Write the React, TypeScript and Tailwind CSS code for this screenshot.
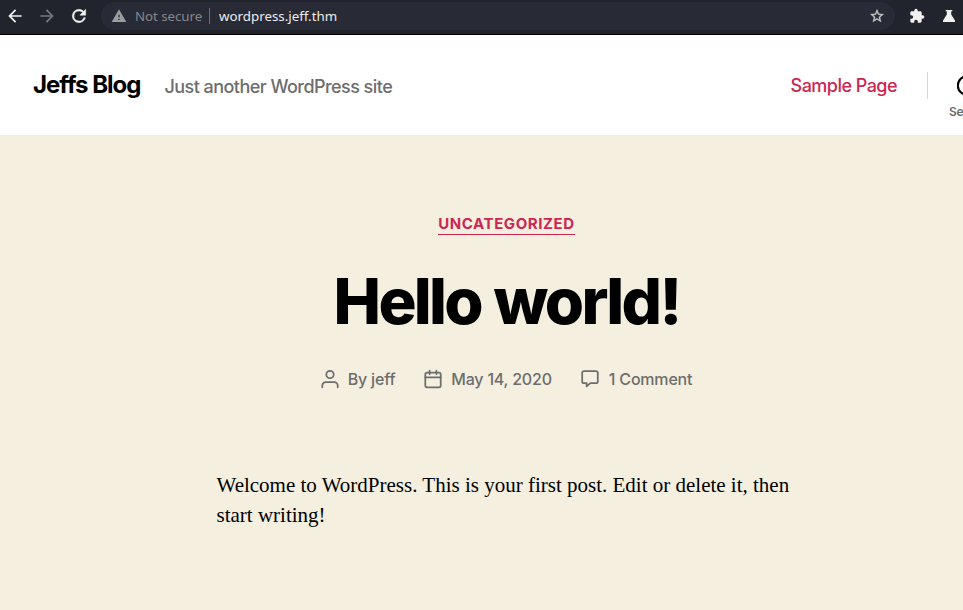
import type { ReactNode } from "react";

function Toolbar() {
  return (
    <div className="flex h-[35px] shrink-0 items-start border-b border-black bg-[#22242d] font-['Noto_Sans',sans-serif] text-[13.33px]">
      <div className="flex h-8 w-[101px] shrink-0 items-center pl-[5px]">
        <svg className="mr-3 size-5 shrink-0" viewBox="0 0 24 24" fill="#f1f1f1"><path d="M20 11H7.83l5.59-5.59L12 4l-8 8 8 8 1.41-1.41L7.83 13H20v-2z" /></svg>
        <svg className="mr-3 size-5 shrink-0" viewBox="0 0 24 24" fill="#76777b"><path d="M12 4l-1.41 1.41L16.17 11H4v2h12.17l-5.58 5.59L12 20l8-8z" /></svg>
        <svg className="size-5 shrink-0" viewBox="0 0 24 24" fill="#f1f1f1" stroke="#f1f1f1" strokeWidth=".6"><path d="M17.65 6.35A7.96 7.96 0 0 0 12 4a8 8 0 1 0 7.73 10h-2.08A6 6 0 1 1 12 6c1.66 0 3.14.69 4.22 1.78L13 11h7V4z" /></svg>
      </div>
      <div className="mt-[2px] flex h-7 w-[794px] shrink-0 items-center rounded-full bg-[#282a35] pl-[10px] pr-2">
        <svg className="size-4 shrink-0" viewBox="0 0 24 24" fill="#9c9da1"><path d="M1 21h22L12 2 1 21zm12-3h-2v-2h2v2zm0-4h-2v-4h2v4z" /></svg>
        <span className="ml-2 w-[74px] whitespace-nowrap pt-[2px] tracking-[-0.005em] text-[#85878c]">Not secure</span>
        <span className="h-4 w-px bg-[#6c6d73]" />
        <span className="ml-[9px] pt-[2px] text-[#ececed]">wordpress.jeff.thm</span>
        <svg className="ml-auto mr-[2px] size-4 shrink-0" viewBox="0 0 24 24" fill="#c9c9c9" stroke="#c9c9c9" strokeWidth=".5"><path d="M22 9.24l-7.19-.62L12 2 9.19 8.63 2 9.24l5.46 4.73L5.82 21 12 17.27 18.18 21l-1.63-7.03L22 9.24zM12 15.4l-3.76 2.27 1-4.28-3.32-2.88 4.38-.38L12 6.1l1.71 4.04 4.38.38-3.32 2.88 1 4.28L12 15.4z" /></svg>
      </div>
      <div className="flex h-8 items-center pl-[14px]">
        <svg className="size-4 shrink-0" viewBox="0 0 24 24" fill="#f1f1f1"><path d="M20.5 11H19V7c0-1.1-.9-2-2-2h-4V3.5a2.5 2.5 0 0 0-5 0V5H4c-1.1 0-1.99.9-1.99 2v3.8H3.5c1.49 0 2.7 1.21 2.7 2.7s-1.21 2.7-2.7 2.7H2V20c0 1.1.9 2 2 2h3.8v-1.5c0-1.49 1.21-2.7 2.7-2.7s2.7 1.21 2.7 2.7V22H17c1.1 0 2-.9 2-2v-4h1.5a2.5 2.5 0 0 0 0-5z" /></svg>
        <svg className="ml-[18px] h-3 w-3 shrink-0" viewBox="0 0 12 12" fill="#f1f1f1"><path d="M2.7 0h6.6v1.3H8.2v3.1L12 10.6V12H0v-1.4l3.8-6.2V1.3H2.7z" /></svg>
      </div>
    </div>
  );
}

function SiteHeader() {
  return (
    <header className="flex h-[100px] shrink-0 items-start overflow-hidden bg-white pl-[33px] font-medium">
      <h1 className="mt-[35px] w-[131.5px] whitespace-nowrap text-[24px] font-bold leading-[30px] tracking-[-0.0415em] text-black">Jeffs Blog</h1>
      <p className="mt-[38px] whitespace-nowrap text-[18px] leading-[27px] tracking-[-0.0305em] text-[#6d6d6d]">Just another WordPress site</p>
      <a className="ml-auto mt-[37px] whitespace-nowrap text-[18px] leading-[27px] tracking-[-0.0295em] text-[#cd2653]">Sample Page</a>
      <span className="ml-[30px] mt-[37px] h-[27px] w-px shrink-0 bg-[#dcd7ca]" />
      <div className="mt-[39px] flex w-[35px] shrink-0 flex-col items-start overflow-hidden pl-[21px]">
        <svg className="ml-2 size-[25px] shrink-0" viewBox="0 0 25 25" fill="none" stroke="#000" strokeWidth="2.2"><circle cx="10" cy="11.5" r="9.2" /><path d="m17 18 6 6" /></svg>
        <span className="mt-[5px] text-[12px] font-semibold leading-4 tracking-[-0.02em] text-[#6d6d6d]">Search</span>
      </div>
    </header>
  );
}

function Meta({ icon, children }: { icon: ReactNode; children: ReactNode }) {
  return (
    <li className="flex items-center whitespace-nowrap">
      <svg className="mr-[9px] h-5 w-[18px] shrink-0" viewBox="0 0 18 20" fill="none" stroke="#6d6d6d" strokeWidth="1.75" strokeLinecap="round" strokeLinejoin="round">{icon}</svg>
      <span>{children}</span>
    </li>
  );
}

function Post() {
  return (
    <article className="flex w-[1013px] shrink-0 flex-col items-center pt-[79px]">
      <a className="border-b border-[#cd2653] text-[15px] font-bold leading-[20px] tracking-[0.039em] text-[#cd2653]">UNCATEGORIZED</a>
      <h2 className="mt-[30px] text-[63.5px] font-extrabold leading-[72px] tracking-[-0.0430em] text-black [word-spacing:1.5px]">Hello world!</h2>
      <ul className="mt-[30px] flex h-[24px] gap-[29px] text-[16px] font-medium leading-6 tracking-[-0.012em] text-[#6d6d6d]">
        <Meta icon={<><circle cx="9" cy="5.5" r="3.7" /><path d="M1.3 18.3v-1.7a3.6 3.6 0 0 1 3.6-3.6h8.2a3.6 3.6 0 0 1 3.6 3.6v1.7" /></>}>By jeff</Meta>
        <Meta icon={<><rect x="1.3" y="3.5" width="15.4" height="14.8" rx="1.8" /><path d="M1.3 8.3h15.4M5.6 1.7v3.5M12.4 1.7v3.5" /></>}>May 14, 2020</Meta>
        <Meta icon={<path d="M3 2h12a1.8 1.8 0 0 1 1.8 1.8v8.6a1.8 1.8 0 0 1-1.8 1.8H9.4l-3.8 3.2v-3.2H3a1.8 1.8 0 0 1-1.8-1.8V3.8A1.8 1.8 0 0 1 3 2Z" />}><span className="pl-px">1 Comment</span></Meta>
      </ul>
      <p className="mt-[79px] w-[580px] font-['Liberation_Serif',serif] text-[21px] leading-[30px] text-black">
        Welcome to WordPress. This is your first post. Edit or delete it, then start writing!
      </p>
    </article>
  );
}

export default function App() {
  return (
    <div className="flex h-screen w-full flex-col overflow-hidden bg-[#f5efe0] font-['Inter',sans-serif]">
      <Toolbar />
      <SiteHeader />
      <Post />
    </div>
  );
}
